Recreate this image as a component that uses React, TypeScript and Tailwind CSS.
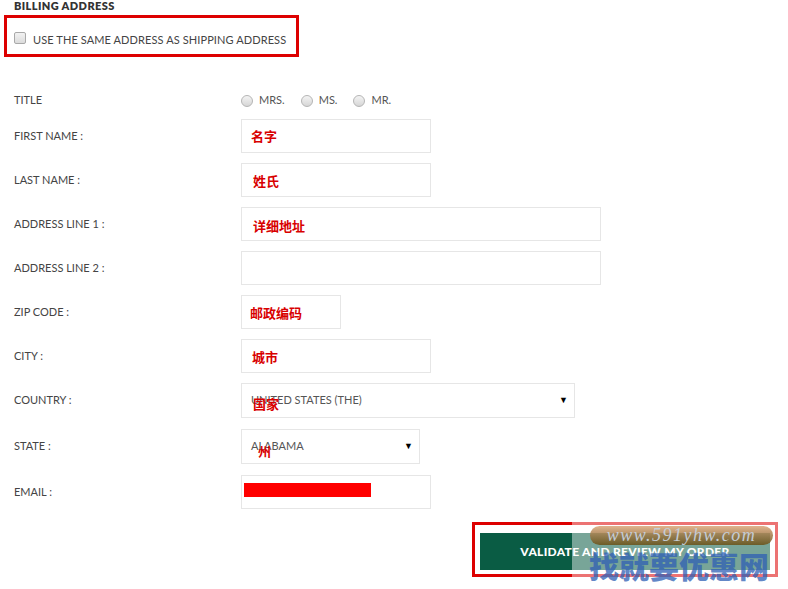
import React from "react";

const labelFont = { fontFamily: "Lato, 'Open Sans', sans-serif" };

function Label({ children }: { children: React.ReactNode }) {
  return (
    <div className="w-[227px] shrink-0 text-[11px] text-[#444]" style={labelFont}>
      {children}
    </div>
  );
}

function Red({ children, className = "" }: { children: React.ReactNode; className?: string }) {
  return (
    <span
      className={"text-[13px] font-bold text-[#d80000] " + className}
      style={{ fontFamily: "'Noto Sans CJK SC', sans-serif" }}
    >
      {children}
    </span>
  );
}

function Row({
  label,
  width,
  h = "h-[34px]",
  mb = "mb-[10px]",
  children,
}: {
  label: string;
  width: string;
  h?: string;
  mb?: string;
  children?: React.ReactNode;
}) {
  return (
    <div className={"flex items-center " + mb}>
      <Label>{label}</Label>
      <div className={"relative flex items-center border border-[#e6e6e6] bg-white px-[9px] " + h + " " + width}>
        {children}
      </div>
    </div>
  );
}

function Radio({ label }: { label: string }) {
  return (
    <div className="flex items-center gap-[6px]">
      <span className="block h-[12px] w-[12px] rounded-full border border-[#b5b5b5] bg-gradient-to-b from-[#f4f4f4] to-[#d6d6d6]" />
      <span className="text-[11px] text-[#555]" style={labelFont}>
        {label}
      </span>
    </div>
  );
}

export default function App() {
  return (
    <div className="relative h-[589px] w-[788px] overflow-hidden bg-white">
      <div className="pl-[14px] pt-[0px]">
        <div
          className="h-[13px] text-[11px] font-extrabold leading-[12px] tracking-[0.4px] text-[#333]"
          style={labelFont}
        >
          BILLING ADDRESS
        </div>
      </div>
      <div className="ml-[4px] mt-[2px] flex h-[42px] w-[295px] items-center gap-[7px] border-[3px] border-[#dd0000] pl-[7px] pt-[8px]">
        <span className="block h-[12px] w-[12px] -translate-y-[2px] rounded-[2px] border border-[#a9a9a9] bg-gradient-to-b from-[#f2f2f2] to-[#dcdcdc]" />
        <span className="text-[11px] tracking-[0.1px] text-[#444]" style={labelFont}>
          USE THE SAME ADDRESS AS SHIPPING ADDRESS
        </span>
      </div>

      <div className="pl-[14px] pt-[35px]">
        <div className="mb-[10px] flex h-[17px] items-center">
          <Label>TITLE</Label>
          <div className="flex items-center gap-[16px]">
            <Radio label="MRS." />
            <Radio label="MS." />
            <Radio label="MR." />
          </div>
        </div>

        <Row label="FIRST NAME :" width="w-[190px]">
          <Red>名字</Red>
        </Row>
        <Row label="LAST NAME :" width="w-[190px]">
          <Red className="ml-[2px] mt-[2px]">姓氏</Red>
        </Row>
        <Row label="ADDRESS LINE 1 :" width="w-[360px]">
          <Red className="ml-[2px] mt-[4px]">详细地址</Red>
        </Row>
        <Row label="ADDRESS LINE 2 :" width="w-[360px]" />
        <Row label="ZIP CODE :" width="w-[100px]">
          <Red className="-ml-[1px] mt-[2px]">邮政编码</Red>
        </Row>
        <Row label="CITY :" width="w-[190px]">
          <Red className="ml-[1px] mt-[2px]">城市</Red>
        </Row>
        <Row label="COUNTRY :" width="w-[334px]" h="h-[35px]" mb="mb-[11px]">
          <span className="text-[11px] text-[#555]" style={labelFont}>
            UNITED STATES (THE)
          </span>
          <Red className="absolute left-[11px] top-[10px]">国家</Red>
          <span className="absolute right-[6px] top-[9px] text-[9px] text-black">▼</span>
        </Row>
        <Row label="STATE :" width="w-[179px]" h="h-[35px]" mb="mb-[11px]">
          <span className="text-[11px] text-[#555]" style={labelFont}>
            ALABAMA
          </span>
          <Red className="absolute left-[16px] top-[11px]">州</Red>
          <span className="absolute right-[6px] top-[9px] text-[9px] text-black">▼</span>
        </Row>
        <Row label="EMAIL :" width="w-[190px]">
          <span className="absolute left-[2px] top-[7px] block h-[14px] w-[127px] bg-[#ff0000]" />
        </Row>
      </div>

      <div className="mt-[13px] flex justify-end pr-[10px]">
        <div className="h-[55px] w-[306px] border-[3px] border-[#dd0000] pl-[5px] pr-[5px] pt-[8px]">
          <div
            className="flex h-[37px] items-center justify-center bg-[#0a5c44] text-[12px] font-black tracking-[0.3px] text-white"
            style={labelFont}
          >
            VALIDATE AND REVIEW MY ORDER
          </div>
        </div>
      </div>

      {/* watermark */}
      <div className="pointer-events-none absolute left-[572px] top-[521px] h-[58px] w-[210px] bg-white/45" />
      <div className="pointer-events-none absolute left-[590px] top-[526px] flex h-[19px] w-[183px] items-center justify-center rounded-full bg-gradient-to-b from-[#d9a070]/80 to-[#6a5014]/85">
        <span
          className="text-[18px] italic tracking-[1.5px] text-[#c4ccd6]"
          style={{ fontFamily: "'Liberation Serif', 'DejaVu Serif', serif" }}
        >
          www.591yhw.com
        </span>
      </div>
      <div
        className="pointer-events-none absolute left-[589px] top-[548px] text-[30px] font-black leading-[34px] text-[#2f5fb5]/75"
        style={{ fontFamily: "'Noto Sans CJK SC', sans-serif" }}
      >
        找就要优惠网
      </div>
    </div>
  );
}
